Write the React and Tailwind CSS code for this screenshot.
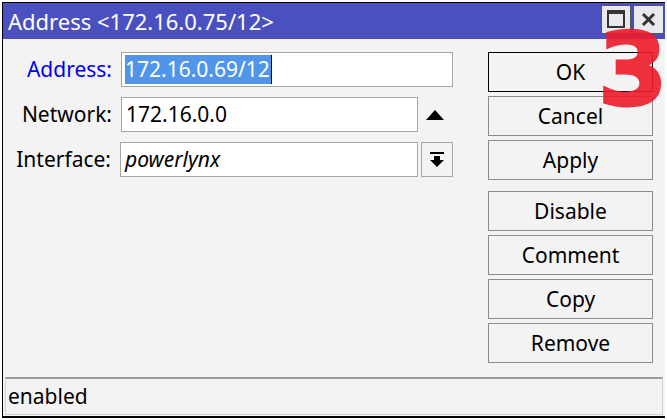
import React from 'react';

const font = { fontFamily: '"Noto Sans", "Liberation Sans", sans-serif' };

const FieldRow = ({ label, labelClass = 'text-black', children }) => (
  <div className="flex items-center h-[35px]">
    <div className={`w-[109px] text-right text-[21px] leading-none ${labelClass}`}>{label}</div>
    <div className="ml-[9px] flex items-center">{children}</div>
  </div>
);

const DialogButton = ({ children, primary }) => (
  <button
    className={`h-[40px] w-[165px] bg-[#f3f3f3] text-[21px] leading-none text-black border ${
      primary ? 'border-black' : 'border-[#8c8c8c]'
    }`}
  >
    {children}
  </button>
);

const DropdownIcon = () => (
  <svg width="14" height="15" viewBox="0 0 14 15">
    <rect x="0" y="0" width="14" height="2" fill="#000" />
    <rect x="4" y="4" width="6" height="4" fill="#000" />
    <path d="M0 8 L14 8 L7 15 Z" fill="#000" />
  </svg>
);

export default function App() {
  return (
    <div className="relative w-[667px] h-[420px] overflow-hidden bg-white" style={font}>
      <div className="ml-[2px] mt-[2px] w-[663px] h-[416px] border-l border-t border-b-2 border-black flex flex-col bg-[#f3f3f3]">
        {/* title bar */}
        <div className="h-[36px] shrink-0 bg-[#4b50c1] flex items-center justify-between pl-[5px] pr-[1px]">
          <span className="text-white text-[22px] leading-none whitespace-nowrap">Address &lt;172.16.0.75/12&gt;</span>
          <div className="flex shrink-0 gap-[2px] mb-[4px]">
            <div className="w-[30px] h-[29px] bg-[#e9e9ed] border border-[#555] flex items-center justify-center">
              <div className="w-[18px] h-[18px] border-2 border-t-[4px] border-[#333]" />
            </div>
            <div className="w-[31px] h-[29px] bg-[#e9e9ed] border border-[#555] flex items-center justify-center">
              <svg width="15" height="15" viewBox="0 0 15 15">
                <path d="M2 2 L13 13 M13 2 L2 13" stroke="#333" strokeWidth="3" />
              </svg>
            </div>
          </div>
        </div>

        {/* body */}
        <div className="flex pt-[13px]">
          <div className="w-[450px] flex flex-col gap-[10px]">
            <FieldRow label="Address:" labelClass="text-[#0000ee]">
              <div className="w-[332px] h-[35px] bg-white border border-[#a5a5a5] flex items-center pl-[3px]">
                <span className="bg-[#5195ea] text-white text-[21px] leading-[29px] h-[29px] pr-px border-r border-black">
                  172.16.0.69/12
                </span>
              </div>
            </FieldRow>
            <FieldRow label="Network:">
              <div className="w-[297px] h-[35px] bg-white border border-[#a5a5a5] flex items-center pl-[4px] text-[21px]">
                172.16.0.0
              </div>
              <svg className="ml-[8px]" width="18" height="10" viewBox="0 0 18 10">
                <path d="M9 0 L18 10 L0 10 Z" fill="#000" />
              </svg>
            </FieldRow>
            <FieldRow label="Interface:">
              <div className="w-[298px] h-[35px] bg-white border border-[#a5a5a5] flex items-center pl-[4px] text-[21px] italic">
                powerlynx
              </div>
              <div className="ml-[3px] w-[32px] h-[35px] border border-[#a5a5a5] flex items-center justify-center">
                <DropdownIcon />
              </div>
            </FieldRow>
          </div>

          <div className="ml-[35px] flex flex-col">
            <div className="flex flex-col gap-[4px]">
              <DialogButton primary>OK</DialogButton>
              <DialogButton>Cancel</DialogButton>
              <DialogButton>Apply</DialogButton>
            </div>
            <div className="mt-[11px] flex flex-col gap-[4px]">
              <DialogButton>Disable</DialogButton>
              <DialogButton>Comment</DialogButton>
              <DialogButton>Copy</DialogButton>
              <DialogButton>Remove</DialogButton>
            </div>
          </div>
        </div>

        {/* status bar */}
        <div className="mt-[14px] ml-[2px] w-[658px] h-[38px] border border-[#d2d2d2] border-t-[#9a9a9a] border-t-2 flex items-center pl-[2px] text-[21px]">
          enabled
        </div>
      </div>

      <span
        className="absolute left-[598px] top-[21px] text-[100px] leading-none font-bold text-[#ee1c2b] opacity-90 [-webkit-text-stroke:3px_#ee1c2b]"
        style={{ fontFamily: '"DejaVu Sans", sans-serif' }}
      >
        3
      </span>
    </div>
  );
}
